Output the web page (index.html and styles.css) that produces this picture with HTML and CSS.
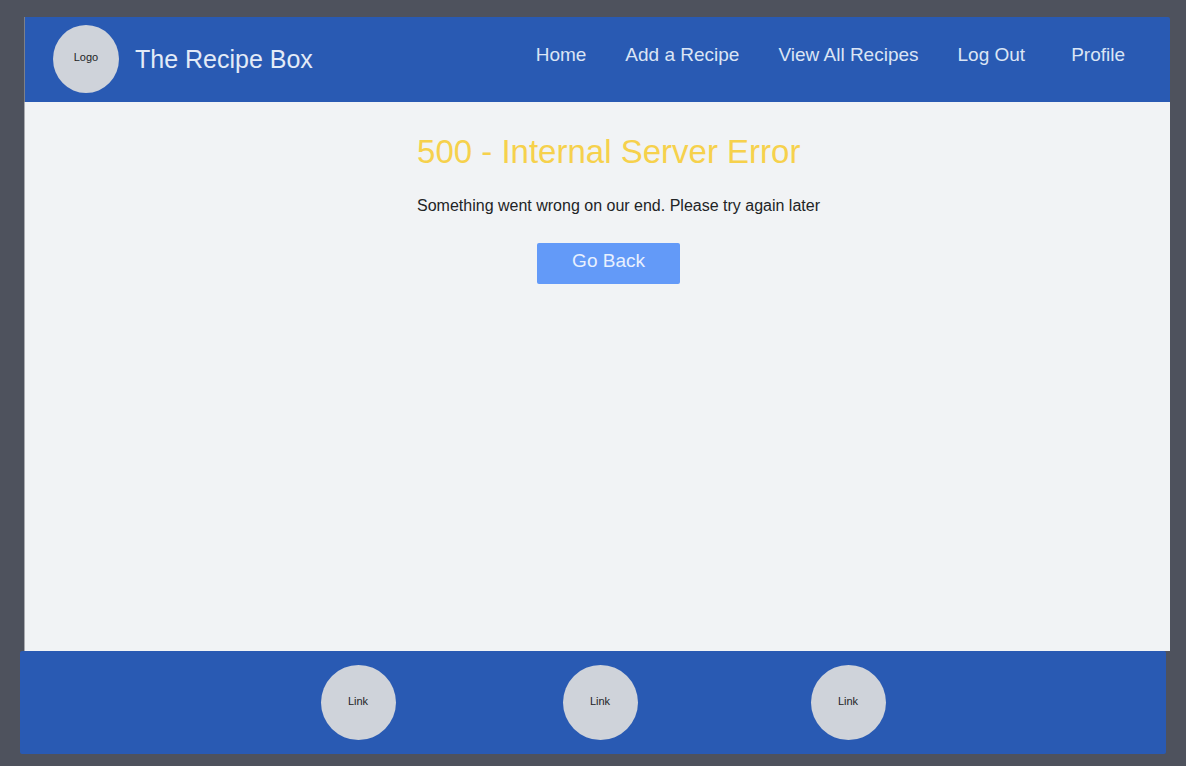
FILE: index.html
```html
<!DOCTYPE html>
<html lang="en">
<head>
  <meta charset="utf-8">
  <meta name="viewport" content="width=device-width, initial-scale=1">
  <title>500 - Internal Server Error</title>
  <link rel="stylesheet" href="styles.css">
</head>
<body class="page">
  <header class="site-header">
    <div class="brand">
      <a class="logo" href="#">Logo</a>
      <span class="brand-name">The Recipe Box</span>
    </div>
    <nav class="site-nav" aria-label="Main">
      <a href="#">Home</a>
      <a href="#">Add a Recipe</a>
      <a href="#">View All Recipes</a>
      <a href="#">Log Out</a>
      <a class="nav-profile" href="#">Profile</a>
    </nav>
  </header>
  <main class="content">
    <div class="message">
      <h1 class="title">500 - Internal Server Error</h1>
      <p class="description">Something went wrong on our end. Please try again later</p>
      <button class="back-button" type="button">Go Back</button>
    </div>
  </main>
  <footer class="site-footer">
    <a class="footer-link" href="#">Link</a>
    <a class="footer-link" href="#">Link</a>
    <a class="footer-link footer-link-last" href="#">Link</a>
  </footer>
</body>
</html>
```
FILE: styles.css
```css
* {
  box-sizing: border-box;
}

.page {
  display: flex;
  flex-direction: column;
  min-height: 100vh;
  margin: 0;
  padding: 17px 16px 12px 24px;
  background: #4e525d;
  color: #222426;
  font-family: "Liberation Sans", Arial, sans-serif;
}

.page a {
  text-decoration: none;
}

.site-header {
  display: flex;
  justify-content: space-between;
  padding: 8px 45px 9px 28px;
  border-left: 1px solid #7d8088;
  border-radius: 0 2px 0 0;
  background: #295ab3;
}

.brand {
  display: flex;
  align-items: center;
  gap: 16px;
}

.page .logo,
.page .footer-link {
  display: flex;
  align-items: center;
  justify-content: center;
  border-radius: 50%;
  background: #cfd3da;
  color: #222426;
  font-size: 11px;
  line-height: 12px;
}

.page .logo {
  width: 66px;
  height: 68px;
  padding-bottom: 4px;
}

.brand-name {
  color: #e3ebf7;
  font-size: 25px;
  line-height: 30px;
}

.site-nav {
  display: flex;
  align-items: flex-start;
  gap: 39px;
  padding-top: 19px;
  font-size: 19px;
  line-height: 22px;
}

.site-nav a {
  color: #dbe5f5;
}

.site-nav .nav-profile {
  margin-left: 7px;
}

.content {
  display: flex;
  flex: 1;
  justify-content: center;
  padding: 30px 0 30px 42px;
  border-left: 1px solid #a8aaaf;
  background: #f1f3f5;
}

.message {
  display: flex;
  flex-direction: column;
  align-items: flex-start;
}

.title {
  margin: 0;
  color: #f6d14c;
  font-size: 33px;
  font-weight: 400;
  line-height: 40px;
}

.description {
  margin: 24px 0 27px;
  font-size: 16px;
  line-height: 20px;
}

.back-button {
  width: 143px;
  margin-left: 120px;
  padding: 7px 0 12px;
  border: 0;
  border-radius: 2px;
  background: #639af8;
  color: #e8f0fe;
  font-family: inherit;
  font-size: 19px;
  line-height: 22px;
}

.site-footer {
  display: flex;
  justify-content: center;
  gap: 167px;
  margin: 0 4px 0 -4px;
  padding: 14px 0 14px 20px;
  border-radius: 2px;
  background: #295ab3;
}

.page .footer-link {
  width: 75px;
  height: 75px;
  padding-bottom: 4px;
}

.page .footer-link-last {
  margin-left: 6px;
}
```
